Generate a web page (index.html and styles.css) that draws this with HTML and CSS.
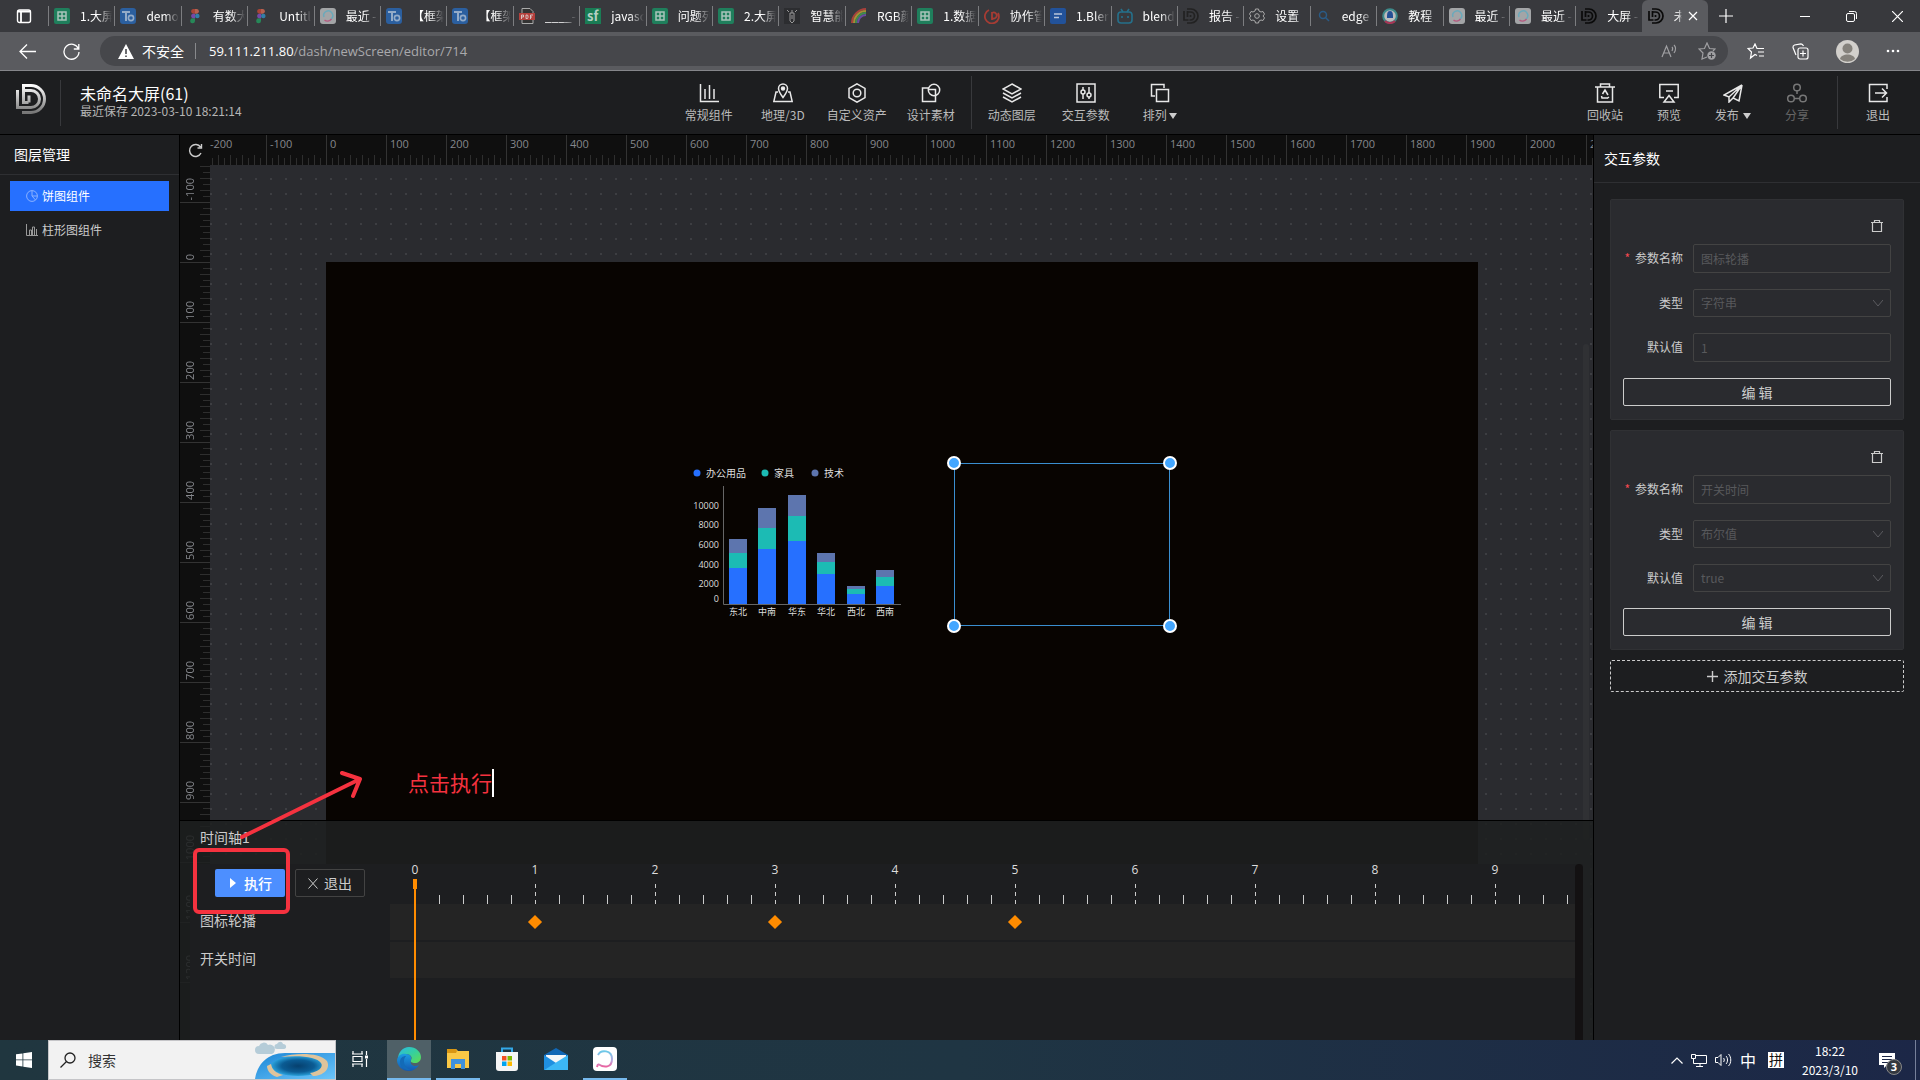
FILE: index.html
```html
<!DOCTYPE html>
<html lang="zh-CN">
<head>
<meta charset="utf-8">
<title>未命名大屏(61)</title>
<link rel="stylesheet" href="styles.css">
</head>
<body>
<svg class="defs" aria-hidden="true">
  <defs>
    <linearGradient id="silver" x1="0" y1="0" x2="0" y2="1"><stop offset="0" stop-color="#fff"/><stop offset="1" stop-color="#777"/></linearGradient>
    <linearGradient id="edge-a" x1="0" y1="0" x2="1" y2="1"><stop offset="0" stop-color="#2bb8e8"/><stop offset=".5" stop-color="#35cfa0"/><stop offset="1" stop-color="#62dc4c"/></linearGradient>
    <linearGradient id="edge-b" x1="0" y1="0" x2="0" y2="1"><stop offset="0" stop-color="#1b9de2"/><stop offset="1" stop-color="#1557b0"/></linearGradient>
    <linearGradient id="swirl" x1="0" y1="0" x2="0" y2="1"><stop offset="0" stop-color="#6cc9e8"/><stop offset=".6" stop-color="#b9a6dd"/><stop offset="1" stop-color="#ee5f9c"/></linearGradient>
    <linearGradient id="sea" x1="0" y1="0" x2="1" y2="1"><stop offset="0" stop-color="#1a86d6"/><stop offset="1" stop-color="#6cc5fa"/></linearGradient>
    <radialGradient id="hole"><stop offset="0" stop-color="#06406e"/><stop offset=".6" stop-color="#0b5c94"/><stop offset="1" stop-color="#2aa2dc"/></radialGradient>
    <symbol id="sheet" viewBox="0 0 16 16"><rect width="16" height="16" rx="2" fill="#1f7f5c"/><path d="M4 4h8v8H4zM8 4v8M4 8h8" fill="none" stroke="#a9c4ba" stroke-width="1.5"/></symbol>
    <symbol id="todo" viewBox="0 0 16 16"><rect width="16" height="16" rx="3" fill="#2b5f9f"/><path d="M2 4h8M6 4v9" fill="none" stroke="#93abc8" stroke-width="2"/><circle cx="11" cy="10" r="2.6" fill="none" stroke="#93abc8" stroke-width="1.6"/></symbol>
    <symbol id="figma" viewBox="0 0 16 16"><path d="M8 1H6a2.4 2.4 0 0 0 0 4.7h2z" fill="#a94436"/><path d="M8 1h2a2.4 2.4 0 0 1 0 4.7H8z" fill="#b5604f"/><path d="M8 5.700H6a2.400 2.400 0 0 0 0 4.700h2z" fill="#7549a8"/><circle cx="10.300" cy="8" r="2.300" fill="#327ea8"/><path d="M8 10.400H6A2.400 2.400 0 1 0 8 13z" fill="#268858"/></symbol>
    <symbol id="swirlicon" viewBox="0 0 16 16"><rect width="16" height="16" rx="3" fill="#a3a5a7"/><path d="M4 9a4.500 4.500 0 1 1 7 2" fill="none" stroke="#6aa9bb" stroke-width="1.500"/><path d="M4.500 12c2 1.600 5 1.400 7-1" fill="none" stroke="#b55a80" stroke-width="1.500"/></symbol>
    <symbol id="dd" viewBox="0 0 32 32"><path d="M2 6v18h9M8 2h8a13 13 0 0 1 0 28H8M9 6v12M9 8h6a7.500 7.500 0 0 1 0 16h-2M15 14v4" fill="none" stroke="currentColor" stroke-width="3.400"/></symbol>
    <symbol id="trash" viewBox="0 0 14 14"><path d="M1 3.500h12M4.500 3.500V1.500h5v2M2.500 3.500v9h9v-9" fill="none" stroke="currentColor" stroke-width="1.200"/></symbol>
    <symbol id="chev" viewBox="0 0 10 8"><path d="M0 1l5 6 5-6" fill="none" stroke="currentColor"/></symbol>
  </defs>
</svg>

<header class="browser">
  <div class="tabs">
    <button class="tab-menu" aria-label="标签页操作"><svg width="16" height="16" viewBox="0 0 16 16"><rect x="1.500" y="2" width="13" height="12.500" rx="2" fill="none" stroke="#fff" stroke-width="1.400"/><path d="M1.500 3.500h13M5 4v10" stroke="#fff" stroke-width="1.800"/></svg></button>
    <div class="tab"><svg><use href="#sheet"/></svg><span>1.大屏</span></div>
    <div class="tab"><svg><use href="#todo"/></svg><span>demo</span></div>
    <div class="tab"><svg><use href="#figma"/></svg><span>有数大</span></div>
    <div class="tab"><svg><use href="#figma"/></svg><span>Untitl</span></div>
    <div class="tab"><svg><use href="#swirlicon"/></svg><span>最近 -</span></div>
    <div class="tab"><svg><use href="#todo"/></svg><span>【框架</span></div>
    <div class="tab"><svg><use href="#todo"/></svg><span>【框架</span></div>
    <div class="tab"><svg viewBox="0 0 16 16"><path d="M3 .5h8l3 3v12H3z" fill="#333" stroke="#aaa"/><rect x="0" y="5" width="16" height="7" fill="#b4403c"/><path d="M2.500 11V7h2v2h-2M7 7v3.500h1.500l.5-1V8l-.5-1zM11.500 11V7H14M11.500 9H13" fill="none" stroke="#ddd" stroke-width=".8"/></svg><span>____-</span></div>
    <div class="tab"><svg viewBox="0 0 16 16"><rect width="16" height="16" fill="#1a7d55"/><text x="2" y="13" font-size="13" font-weight="700" fill="#b5cfc4">sf</text></svg><span>javasc</span></div>
    <div class="tab"><svg><use href="#sheet"/></svg><span>问题列</span></div>
    <div class="tab"><svg><use href="#sheet"/></svg><span>2.大屏</span></div>
    <div class="tab"><svg viewBox="0 0 16 16"><rect width="16" height="16" fill="#2c2d30"/><path d="M6 5h4v8l-2 2-2-2zM8 5V2M5 4L3 2M11 4l2-2M8 7v4" fill="none" stroke="#999"/></svg><span>智慧能</span></div>
    <div class="tab"><svg viewBox="0 0 16 16" fill="none" stroke-width="2"><path d="M1 15C1 8 7 1 15 1" stroke="#a8413b"/><path d="M3 15C3 9 8 3 15 3" stroke="#a98c35"/><path d="M5 15c0-5 4-10 10-10" stroke="#3f8d4f"/><path d="M7 15c0-4 3-8 8-8" stroke="#6a4ba0"/></svg><span>RGB颜</span></div>
    <div class="tab"><svg><use href="#sheet"/></svg><span>1.数据</span></div>
    <div class="tab"><svg viewBox="0 0 16 16" fill="none" stroke="#a63c34" stroke-width="1.800"><path d="M5 2a7 7 0 1 0 9 3M8 12V4M8 5a3 3 0 1 1 0 5"/></svg><span>协作管</span></div>
    <div class="tab"><svg viewBox="0 0 16 16"><rect width="16" height="16" rx="2" fill="#22529a"/><path d="M4 6h8M4 9.500h5" stroke="#b8c5da" stroke-width="1.600"/></svg><span>1.Blen</span></div>
    <div class="tab"><svg viewBox="0 0 16 16" fill="none" stroke="#25708b" stroke-width="1.600"><rect x="1" y="4" width="14" height="11" rx="3"/><path d="M4 1l2 3M12 1l-2 3M5 8v2M11 8v2"/></svg><span>blend</span></div>
    <div class="tab dark"><svg><use href="#dd"/></svg><span>报告 -</span></div>
    <div class="tab"><svg viewBox="0 0 16 16" fill="none" stroke="#aaa"><path d="M6.500 1h3l.5 2 2 1 2-.5 1.500 2.600L14 8l1.500 1.900L14 12.500l-2-.5-2 1-.5 2h-3L6 13l-2-1-2 .5L.5 9.900 2 8 .5 6.100 2 3.500l2 .5 2-1z"/><circle cx="8" cy="8" r="2.300"/></svg><span>设置</span></div>
    <div class="tab"><svg viewBox="0 0 16 16" fill="none" stroke="#2a5b86" stroke-width="1.500"><circle cx="7" cy="7" r="3.500"/><path d="M9.500 9.500L13 13"/></svg><span>edge</span></div>
    <div class="tab"><svg viewBox="0 0 16 16"><circle cx="8" cy="8" r="6.800" fill="#bbb" stroke="#3d8a8a" stroke-width="2"/><path d="M3 13a7 7 0 0 0 10 0" fill="none" stroke="#a83555" stroke-width="2"/><path d="M8 3c3 0 3 3 3 7H5c0-4 0-7 3-7z" fill="#244f94"/></svg><span>教程</span></div>
    <div class="tab"><svg><use href="#swirlicon"/></svg><span>最近 -</span></div>
    <div class="tab"><svg><use href="#swirlicon"/></svg><span>最近 -</span></div>
    <div class="tab black"><svg><use href="#dd"/></svg><span>大屏 -</span></div>
    <div class="tab black active"><svg><use href="#dd"/></svg><span>未</span><button aria-label="关闭标签页"><svg viewBox="0 0 10 10"><path d="M1 1l8 8M9 1L1 9" stroke="#fff" stroke-width="1.200"/></svg></button></div>
    <div class="window-buttons">
      <button aria-label="新建标签页"><svg width="14" height="14" viewBox="0 0 14 14"><path d="M7 0v14M0 7h14" stroke="#fff" stroke-width="1.200"/></svg></button>
      <button aria-label="最小化"><svg width="10" height="10" viewBox="0 0 10 10"><path d="M0 5.500h10" stroke="#fff"/></svg></button>
      <button aria-label="还原"><svg width="11" height="11" viewBox="0 0 11 11" fill="none" stroke="#fff"><rect x=".5" y="2.500" width="8" height="8" rx="1.500"/><path d="M3 .5h5.500a2 2 0 0 1 2 2V8"/></svg></button>
      <button aria-label="关闭"><svg width="11" height="11" viewBox="0 0 11 11"><path d="M0 0l11 11M11 0L0 11" stroke="#fff" stroke-width="1.200"/></svg></button>
    </div>
  </div>
  <div class="toolbar">
    <button aria-label="后退"><svg width="17" height="15" viewBox="0 0 17 15" fill="none" stroke="#fff" stroke-width="1.300"><path d="M8 .5l-7 7 7 7M1 7.500h16"/></svg></button>
    <button aria-label="刷新"><svg width="17" height="17" viewBox="0 0 17 17" fill="none" stroke="#fff" stroke-width="1.300"><path d="M15.500 6A7.500 7.500 0 1 0 16 9M15.800 1v5h-5"/></svg></button>
    <div class="address">
      <svg width="16" height="15" viewBox="0 0 16 15"><path d="M8 0l8 15H0z" fill="#fff"/><path d="M8 5v5M8 11.500v1.500" stroke="#46474b" stroke-width="1.600"/></svg>
      <span class="insecure">不安全</span>
      <span class="url"><b>59.111.211.80</b>/dash/newScreen/editor/714</span>
      <svg width="17" height="16" viewBox="0 0 17 16" fill="none" stroke="#a0a0a3" stroke-width="1.200"><path d="M1 14L5.500 3 10 14M2.500 10h6M11 4c1 1 1 2 0 4M13 2c2 2 2 5 0 8"/></svg>
      <svg width="18" height="18" viewBox="0 0 18 18" fill="none" stroke="#a0a0a3" stroke-width="1.200"><path d="M9 15l-5 2 1-6-4-4 5.500-.5L9 1l2.500 5.500L17 7l-2 2"/><circle cx="13.500" cy="13.500" r="4.200" fill="#a0a0a3" stroke="none"/><path d="M13.500 11v5M11 13.500h5" stroke="#46474b"/></svg>
    </div>
    <button aria-label="收藏夹"><svg width="18" height="17" viewBox="0 0 18 17" fill="none" stroke="#fff" stroke-width="1.200"><path d="M10 12.500l-2-1-4.500 3.500 1-6-3.500-3.500 5-.5L8 1l2 4.500h7M11 9h6M12 13h5"/></svg></button>
    <button aria-label="集锦"><svg width="17" height="17" viewBox="0 0 17 17" fill="none" stroke="#fff" stroke-width="1.200"><rect x="6" y="5" width="10" height="11" rx="2"/><path d="M11 7.500v6M8 10.500h6M4 12L1 4.500C.8 3 1 2.500 2.500 2L9 .8c1.500 0 2 1 2.500 2.200"/></svg></button>
    <button aria-label="用户"><svg width="23" height="23" viewBox="0 0 23 23"><circle cx="11.500" cy="11.500" r="11.500" fill="#d2d0cc"/><circle cx="11.500" cy="8.500" r="5" fill="#85827c"/><path d="M4 19c1-6 14-6 15 0a11.500 11.500 0 0 1-15 0z" fill="#85827c"/></svg></button>
    <button aria-label="更多"><svg width="14" height="4" viewBox="0 0 14 4" fill="#fff"><circle cx="2" cy="2" r="1.300"/><circle cx="7" cy="2" r="1.300"/><circle cx="12" cy="2" r="1.300"/></svg></button>
  </div>
</header>

<header class="app-header">
  <svg class="logo" viewBox="0 0 32 32" fill="none" stroke="url(#silver)" stroke-width="3"><path d="M2.500 7v17.500H16a8.500 8.500 0 0 0 0-17M7 2.500h9a13.500 13.500 0 0 1 0 27H7M8.500 2v17.500h5M8 7.500h8M14 12.500v7"/></svg>
  <div class="doc">
    <h1>未命名大屏(61)</h1>
    <p>最近保存 2023-03-10 18:21:14</p>
  </div>
  <nav class="tools">
    <button><svg viewBox="0 0 20 20"><path d="M1.500 1v17.500H20M6 6v10M10.500 2v14M15 6v10"/></svg>常规组件</button>
    <button><svg viewBox="0 0 20 20"><path d="M5 9H3L.8 18.500h18.400L17 9h-2M10 14.500c-3-4-4.500-6-4.500-9a4.500 4.500 0 0 1 9 0c0 3-1.500 5-4.500 9z"/><circle cx="10" cy="5.500" r="1.500" fill="#fff"/></svg>地理/3D</button>
    <button><svg viewBox="0 0 20 20"><path d="M10 .8l8 4.600v9.200l-8 4.600-8-4.600V5.400z"/><circle cx="10" cy="10" r="3.800"/></svg>自定义资产</button>
    <button><svg viewBox="0 0 20 20"><path d="M8 5H1.500v13.500h13V13"/><circle cx="13" cy="7" r="5.700"/><path d="M8 6.500h6.500V12"/></svg>设计素材</button>
    <i class="split"></i>
    <button><svg viewBox="0 0 20 20"><path d="M10 1l9 5-9 5-9-5zM1 10l9 5 9-5M1 14l9 5 9-5"/></svg>动态图层</button>
    <button><svg viewBox="0 0 20 20"><path d="M1 1h18v18H1zM7 4v3M7 11v5M13 4v6M13 14v2"/><circle cx="7" cy="9" r="2"/><circle cx="13" cy="12" r="2"/></svg>交互参数</button>
    <button><svg viewBox="0 0 20 20"><path d="M5 13H1.500V1.500H14V5M6.500 6.500h12v12h-12z"/></svg><span>排列<i class="caret"></i></span></button>
  </nav>
  <nav class="actions">
    <button><svg viewBox="0 0 20 20"><path d="M0 4h20M5.500 4V1h9v3M2.500 4v15h15V4M7.500 11L10 7l3 5M12.500 15H7l-.5-2M12 15.500l2-1.500"/></svg>回收站</button>
    <button><svg viewBox="0 0 20 20"><path d="M5 14.500H.8V1.500h18.400v13H15M7 8h7M10 12.500l5 6.500H5z"/></svg>预览</button>
    <button><svg viewBox="0 0 20 20"><path d="M19 2L1 12l5 2zM19 2l-3 16-6-3zM6 14v5l4-4"/></svg><span>发布 <i class="caret"></i></span></button>
    <button class="off"><svg viewBox="0 0 20 20"><circle cx="10" cy="4.500" r="3.300"/><circle cx="4" cy="15.500" r="3.300"/><circle cx="16" cy="15.500" r="3.300"/><path d="M10 8v3M8 15.500h4"/></svg>分享</button>
    <i class="split"></i>
    <button><svg viewBox="0 0 20 20"><path d="M19 6V1.500H1.500v17H19V14M7 10h11M14 5.500l4.500 4.500-4.500 4.500"/></svg>退出</button>
  </nav>
</header>

<main class="workspace">
  <aside class="layers">
    <h2>图层管理</h2>
    <ul>
      <li class="selected"><svg viewBox="0 0 12 12"><circle cx="6" cy="6" r="5.400"/><path d="M6 .6V6h5.400M6 6l3.500 4"/></svg>饼图组件</li>
      <li><svg viewBox="0 0 12 12"><path d="M.5 0v11.500H12M3.500 6v5M5.500 6v5M3.500 6h2M6.500 3v8M8.500 3v8M6.500 3h2M10.500 5v6"/></svg>柱形图组件</li>
    </ul>
  </aside>

  <section class="canvas">
    <button class="reset" aria-label="重置"><svg width="15" height="15" viewBox="0 0 15 15" fill="none" stroke="#ccc" stroke-width="1.400"><path d="M12.500 4A6 6 0 1 0 13 10M13.500 1v4h-4"/></svg></button>
    <div class="ruler-h"><span>-200</span><span>-100</span><span>0</span><span>100</span><span>200</span><span>300</span><span>400</span><span>500</span><span>600</span><span>700</span><span>800</span><span>900</span><span>1000</span><span>1100</span><span>1200</span><span>1300</span><span>1400</span><span>1500</span><span>1600</span><span>1700</span><span>1800</span><span>1900</span><span>2000</span><span>2100</span></div>
    <div class="ruler-v"><div><span>-100</span></div><div><span>0</span></div><div><span>100</span></div><div><span>200</span></div><div><span>300</span></div><div><span>400</span></div><div><span>500</span></div><div><span>600</span></div><div><span>700</span></div><div><span>800</span></div><div><span>900</span></div><div><span>1000</span></div><div><span>1100</span></div><div><span>1200</span></div></div>
    <div class="grid">
      <div class="stage">
        <svg class="chart" width="220" height="160" viewBox="0 0 220 160">
          <g class="legend"><circle cx="11" cy="11" r="3.500" fill="#2670ff"/><text x="20" y="15">办公用品</text><circle cx="79" cy="11" r="3.500" fill="#1cbbb4"/><text x="88" y="15">家具</text><circle cx="129" cy="11" r="3.500" fill="#5d75ae"/><text x="138" y="15">技术</text></g>
          <path d="M37.500 24v118.500H215" fill="none" stroke="#666"/>
          <g class="y-labels"><text x="33" y="47">10000</text><text x="33" y="66">8000</text><text x="33" y="86">6000</text><text x="33" y="106">4000</text><text x="33" y="125">2000</text><text x="33" y="140">0</text></g>
          <g fill="#5d75ae"><path d="M43 77h18v14H43zM72 46h18v20H72zM102 33h18v21h-18zM131 91h18v9h-18zM161 124h18v3h-18zM190 108h18v7h-18z"/></g>
          <g fill="#1cbbb4"><path d="M43 91h18v15H43zM72 66h18v21H72zM102 54h18v25h-18zM131 100h18v12h-18zM161 127h18v5h-18zM190 115h18v9h-18z"/></g>
          <g fill="#2670ff"><path d="M43 106h18v36H43zM72 87h18v55H72zM102 79h18v63h-18zM131 112h18v30h-18zM161 132h18v10h-18zM190 124h18v18h-18z"/></g>
          <g class="x-labels"><text x="52" y="153">东北</text><text x="81" y="153">中南</text><text x="111" y="153">华东</text><text x="140" y="153">华北</text><text x="170" y="153">西北</text><text x="199" y="153">西南</text></g>
        </svg>
        <div class="selection"><i></i><i></i><i></i><i></i></div>
      </div>
      <i class="scroll-thumb"></i>
    </div>

    <section class="timeline">
      <h3>时间轴1</h3>
      <div class="timeline-body">
        <div class="names">
          <div class="run">
            <button class="primary"><svg width="6" height="10" viewBox="0 0 6 10"><path d="M0 0l6 5-6 5z" fill="#fff"/></svg>执行</button>
            <button class="plain"><svg width="10" height="11" viewBox="0 0 10 11"><path d="M.5 .5l9 10M9.500 .5l-9 10" stroke="#ccc"/></svg>退出</button>
          </div>
          <p>图标轮播</p>
          <p>开关时间</p>
        </div>
        <div class="tracks">
          <div class="scale"><span>0</span><span>1</span><span>2</span><span>3</span><span>4</span><span>5</span><span>6</span><span>7</span><span>8</span><span>9</span><span></span></div>
          <div class="track"><i class="key k1"></i><i class="key k3"></i><i class="key k5"></i></div>
          <div class="track"></div>
          <i class="playhead"></i>
        </div>
        <i class="track-scroll"></i>
      </div>
    </section>
    <svg class="mark" width="190" height="160" viewBox="0 0 190 160" fill="none" stroke="#f5323f" stroke-width="4"><rect x="15" y="90" width="93" height="62" rx="4"/><path d="M62 77L178 20M162 13l18 6-7 17" stroke-linecap="round" stroke-linejoin="round"/></svg>
    <p class="note">点击执行</p>
  </section>

  <aside class="params">
    <h2>交互参数</h2>
    <div class="param-list">
      <form class="card">
        <button type="button" class="del" aria-label="删除"><svg width="14" height="14"><use href="#trash"/></svg></button>
        <label class="required" for="n1">参数名称</label><input id="n1" value="图标轮播" disabled>
        <label for="t1">类型</label><div class="pick"><select id="t1" disabled><option>字符串</option></select><svg width="10" height="8"><use href="#chev"/></svg></div>
        <label for="d1">默认值</label><input id="d1" value="1" disabled>
        <button type="button" class="edit">编 辑</button>
      </form>
      <form class="card">
        <button type="button" class="del" aria-label="删除"><svg width="14" height="14"><use href="#trash"/></svg></button>
        <label class="required" for="n2">参数名称</label><input id="n2" value="开关时间" disabled>
        <label for="t2">类型</label><div class="pick"><select id="t2" disabled><option>布尔值</option></select><svg width="10" height="8"><use href="#chev"/></svg></div>
        <label for="d2">默认值</label><div class="pick"><select id="d2" disabled><option>true</option></select><svg width="10" height="8"><use href="#chev"/></svg></div>
        <button type="button" class="edit">编 辑</button>
      </form>
      <button class="add"><svg width="11" height="11" viewBox="0 0 11 11"><path d="M5.500 0v11M0 5.500h11" stroke="#ccc" stroke-width="1.400"/></svg>添加交互参数</button>
    </div>
  </aside>
</main>

<footer class="taskbar">
  <button class="start" aria-label="开始"><svg width="16" height="16" viewBox="0 0 16 16" fill="#fff"><path d="M0 2.300l6.500-.9v6.100H0zM7.300 1.300L16 0v7.500H7.300zM0 8.300h6.500v6.200L0 13.600zM7.300 8.300H16V16l-8.700-1.300z"/></svg></button>
  <div class="search">
    <svg width="16" height="16" viewBox="0 0 16 16" fill="none" stroke="#222" stroke-width="1.300"><circle cx="10" cy="6" r="5"/><path d="M6.500 9.500L.5 15.500"/></svg>
    <input aria-label="搜索" placeholder="搜索">
    <svg width="80" height="38" viewBox="0 0 80 38"><path d="M4 13a4 4 0 0 1 0-8 5 5 0 0 1 9-1 4 4 0 0 1 4 9zM22 8a2.500 2.500 0 0 1 0-5c2-3 5-3 6 0 4 0 4 5 1 5z" fill="#b5ccd8"/><path d="M0 38C2 24 12 12 30 12h50v26z" fill="url(#sea)"/><ellipse cx="43" cy="25" rx="27" ry="10" fill="url(#hole)"/><path d="M12 25c0 5 4 9 10 11l6-2c-7-2-11-5-12-11zM26 16c14-4 38-5 46 4 4 8-4 15-14 15l-3-3c8-1 14-6 11-10-4-6-20-8-40-6z" fill="#dfc49b"/></svg>
  </div>
  <button class="task" aria-label="任务视图"><svg width="16" height="16" viewBox="0 0 16 16" fill="none" stroke="#fff" stroke-width="1.200"><path d="M0 3h11M0 13h11M1 0v3M10 0v3M1 16v-3M10 16v-3M1 5.500h9v5H1zM14.500 0v4M14.500 8v8"/><path d="M13 4.500h3v3h-3z" fill="#fff" stroke="none"/></svg></button>
  <button class="task on current" aria-label="Microsoft Edge"><svg width="24" height="24" viewBox="0 0 24 24"><path d="M1 12C1 5 6 0 12 0c7 0 12 5 12 10 0 4-3 6-6 6-3 0-5-1-4-3 2-3-1-6-5-6-4 0-7 2-8 5z" fill="url(#edge-a)"/><path d="M0 13c1-5 5-7 9-6 4 0 6 3 5 6-2 4 3 8 8 5-3 4-6 6-10 6C5 24 0 19 0 13z" fill="url(#edge-b)"/><path d="M9 9c-4 4-2 12 5 14-6 1-11-3-11-8 0-4 3-6 6-6z" fill="#136bb8"/></svg></button>
  <button class="task on" aria-label="文件资源管理器"><svg width="22" height="22" viewBox="0 0 22 22"><path d="M0 1h9l2 2h11v17H0z" fill="#f9c846"/><path d="M0 1h9l1 2-1 2H0z" fill="#d89613"/><path d="M4 21v-10h14v10h-4v-5H8v5z" fill="#3f91dc"/></svg></button>
  <button class="task" aria-label="应用商店"><svg width="24" height="24" viewBox="0 0 24 24"><path d="M7 7V1.500h10V7" fill="none" stroke="#33a8e8" stroke-width="2"/><path d="M1 5h22v16a3 3 0 0 1-3 3H4a3 3 0 0 1-3-3z" fill="#f5f5f5"/><path d="M7 9h4.500v4.500H7z" fill="#f25022"/><path d="M12.500 9H17v4.500h-4.500z" fill="#7fba00"/><path d="M7 14.500h4.500V19H7z" fill="#00a4ef"/><path d="M12.500 14.500H17V19h-4.500z" fill="#ffb900"/></svg></button>
  <button class="task" aria-label="邮件"><svg width="24" height="24" viewBox="0 0 24 24"><path d="M0 8l12-7 12 7v15H0z" fill="#1167b5"/><path d="M2 8h20v8H2z" fill="#f4f6f8"/><path d="M0 8l12 8L0 23z" fill="#1f8fe0"/><path d="M24 8v15H0z" fill="#3cb7f5"/></svg></button>
  <button class="task on" aria-label="文档"><svg width="24" height="24" viewBox="0 0 24 24"><rect width="24" height="24" rx="4" fill="#fff"/><path d="M5 8C8 2 19 3 19 12s-8 9-14 5M4 20l1-3" fill="none" stroke="url(#swirl)" stroke-width="2"/></svg></button>
  <div class="tray">
    <svg width="12" height="7" viewBox="0 0 12 7" fill="none" stroke="#fff" stroke-width="1.200"><path d="M.5 6.500L6 1l5.500 5.500"/></svg>
    <svg width="16" height="14" viewBox="0 0 16 14" fill="none" stroke="#fff"><path d="M5 2.500h10.500v8H2.500V6M.5 1.500h4v4h-4zM9 10.500v3M5 13.500h7"/></svg>
    <svg width="17" height="14" viewBox="0 0 17 14" fill="none" stroke="#fff"><path d="M.5 4.500H3l3-3v11l-3-3H.5zM8.500 5c1 1 1 3 0 4M11 3c2 2 2 6 0 8M13.500 1c3 3 3 9 0 12"/></svg>
    <span class="ime">中</span>
    <span class="pin">拼</span>
    <time>18:22<br>2023/3/10</time>
    <div class="notice"><svg width="16" height="15" viewBox="0 0 16 15"><path d="M0 0h16v12H8l-3 3v-3H0z" fill="#fff"/><path d="M3 3.500h10M3 6.500h10M3 9.500h6" stroke="#1c2747"/></svg><b>3</b></div>
  </div>
</footer>
</body>
</html>
```
FILE: styles.css
```css
* { box-sizing: border-box; }
body {
  margin: 0;
  min-height: 100vh;
  display: flex;
  flex-direction: column;
  background: #1d1e20;
  color: #ccc;
  font: 12px/16px "Noto Sans CJK SC", sans-serif;
}
h1, h2, h3, p, ul { margin: 0; padding: 0; font-weight: 400; list-style: none; }
button { margin: 0; padding: 0; border: 0; background: none; color: inherit; font: inherit; }
svg { display: block; flex: none; }
.defs { position: absolute; width: 0; height: 0; }

/* Browser frame */
.browser { background: #5a5b5f; border-bottom: 1px solid #85868a; }
.tabs { display: flex; height: 32px; background: #38393d; }
.tab-menu { width: 48px; display: grid; place-items: center; }
.tab { flex: 1 1 0; min-width: 0; display: flex; align-items: center; gap: 10px; padding: 0 2px 0 6px; position: relative; color: #fff; }
.tab::before { content: ""; position: absolute; left: 0; top: 6px; height: 20px; width: 1px; background: #7c7d80; }
.tab > svg { width: 16px; height: 16px; }
.tab span { flex: 1; overflow: hidden; white-space: nowrap; -webkit-mask: linear-gradient(90deg, #000 55%, transparent); mask: linear-gradient(90deg, #000 55%, transparent); }
.tab.dark svg { color: #222; }
.tab.black > svg { color: #0a0a0a; }
.tab.active { background: #5a5b5f; border-radius: 6px 6px 0 0; }
.tab.active::before { display: none; }
.tab.active span { flex: 0 0 8px; }
.tab.active button { margin-left: -4px; }
.tab.active button svg { width: 10px; height: 10px; }
.window-buttons { width: 212px; display: grid; grid-template-columns: 36px 1fr 46px 46px; }
.window-buttons button { display: grid; align-items: center; justify-items: center; }
.window-buttons button:nth-child(2) { justify-items: end; padding-right: 18px; }
.toolbar { display: flex; align-items: center; height: 38px; padding: 0 20px 0 19px; gap: 27px; }
.toolbar > button:nth-child(4) { margin-left: -8px; }
.address { flex: 1; height: 30px; margin-left: -7px; padding: 0 12px 0 18px; border-radius: 15px; background: #46474b; display: flex; align-items: center; gap: 8px; color: #fff; font-size: 14px; }
.insecure { padding-right: 11px; border-right: 1px solid #88898c; }
.url { flex: 1; padding-left: 5px; color: #a9a9ac; font-family: "Open Sans", sans-serif; font-size: 13px; }
.url b { color: #fff; font-weight: 400; }
.address svg:last-child { margin-left: 12px; }

/* Application header */
.app-header { display: grid; grid-template-columns: 60px 11fr auto 13fr; height: 64px; border-bottom: 1px solid #000; background: #1d1e20; }
.logo { width: 32px; height: 32px; margin: 12px 0 0 15px; }
.doc { margin: 9px 0 9px; padding: 4px 0 0 19px; border-left: 1px solid #38393c; height: 46px; }
.doc h1 { color: #fff; font-size: 16px; line-height: 18px; }
.doc p { color: #b5b5b5; line-height: 18px; }
.tools, .actions { display: flex; align-items: stretch; }
.actions { justify-content: flex-end; padding-right: 8px; }
.app-header button { width: 74px; padding-top: 12px; display: flex; flex-direction: column; align-items: center; gap: 4px; color: #bbb; line-height: 16px; }
.app-header button svg { width: 20px; height: 20px; fill: none; stroke: #e8e8e8; stroke-width: 1.500; }
.actions button { width: 64px; }
.actions button:last-child { width: 68px; }
.app-header .off { color: #666; }
.app-header .off svg { stroke: #777; }
.split { width: 1px; margin: 5px 0 6px 3px; background: #38393c; }
.tools .split { margin-right: 3px; }
.actions .split { margin: 5px 6px 6px 8px; }
.caret { display: inline-block; margin-left: 2px; border: 4px solid transparent; border-top: 6px solid #ccc; border-bottom: 0; vertical-align: 1px; }

/* Workspace */
.workspace { flex: 1; display: grid; grid-template-columns: 180px 1fr 327px; }
.layers { border-right: 1px solid #000; }
.layers h2 { height: 40px; padding-left: 14px; border-bottom: 1px solid #2e2f32; color: #fff; font-size: 14px; line-height: 38px; }
.layers ul { padding: 6px 10px; display: grid; gap: 4px; }
.layers li { display: flex; align-items: center; gap: 4px; height: 30px; padding-left: 16px; }
.layers li svg { width: 12px; height: 12px; fill: none; stroke: #999; }
.layers .selected { background: #2670ff; color: #fff; }
.layers .selected svg { stroke: #8bb1ff; }

.canvas { position: relative; display: grid; grid-template: 30px 1fr / 30px 1fr; overflow: hidden; background: #0f0f0f; min-width: 0; }
.reset { display: grid; place-items: center; }
.ruler-h { display: flex; overflow: hidden; margin-left: -4px; clip-path: inset(0 0 0 4px); color: #85878c; font: 11px/16px "Open Sans", sans-serif; }
.ruler-h span {
  flex: 0 0 60px; padding: 1px 0 0 3px; border-left: 1px solid #333;
  background: repeating-linear-gradient(90deg, transparent 0 11px, #2e2e2e 11px 12px) 0 100% / 100% 10px no-repeat,
    repeating-linear-gradient(90deg, transparent 0 5px, #2e2e2e 5px 6px) 0 100% / 100% 7px no-repeat;
}
.ruler-v { height: 0; min-height: 100%; overflow: hidden; color: #85878c; font: 11px/16px "Open Sans", sans-serif; }
.ruler-v div {
  height: 60px; display: flex; align-items: flex-end; padding: 0 0 2px 2px; border-bottom: 1px solid #333;
  background: repeating-linear-gradient(0deg, transparent 0 11px, #2e2e2e 11px 12px) 100% 0 / 10px 100% no-repeat,
    repeating-linear-gradient(0deg, transparent 0 5px, #2e2e2e 5px 6px) 100% 0 / 7px 100% no-repeat;
}
.ruler-v div:first-child { margin-top: -22px; }
.ruler-v span { writing-mode: vertical-rl; transform: rotate(180deg); }
.grid { position: relative; overflow: hidden; background: conic-gradient(from 270deg at 2px 2px, #3d3e42 90deg, transparent 0) 0 13px / 15px 15px #2a2b2f; }
.stage { position: absolute; left: 116px; top: 97px; width: 1152px; height: 648px; background: #080401; }
.chart { position: absolute; left: 360px; top: 200px; fill: #ddd; font-size: 10px; }
.y-labels { text-anchor: end; font: 9px "Open Sans", sans-serif; }
.x-labels { text-anchor: middle; font-size: 9px; }
.selection { position: absolute; left: 628px; top: 201px; width: 216px; height: 163px; border: 1px solid #3a8ed0; }
.selection i { position: absolute; width: 14px; height: 14px; border: 2px solid #fff; border-radius: 50%; background: #43a6ff; left: -8px; top: -8px; }
.selection i:nth-child(2n) { left: auto; right: -8px; }
.selection i:nth-child(n+3) { top: auto; bottom: -8px; }
.scroll-thumb { position: absolute; right: 4px; top: 179px; bottom: 200px; width: 6px; border-radius: 3px; background: #303134; }

/* Timeline */
.timeline { position: absolute; left: 0; right: 0; bottom: 0; height: 220px; padding: 0 10px; border-top: 1px solid #000; background: rgba(30, 32, 32, .87); font-size: 14px; display: flex; flex-direction: column; }
.timeline h3 { height: 43px; padding-left: 10px; font-size: 14px; line-height: 32px; }
.timeline-body { flex: 1; display: grid; grid-template-columns: 200px 1fr 8px; background: #1d1e20; }
.run { display: flex; gap: 10px; height: 40px; padding: 5px 0 7px 25px; }
.run button { width: 70px; height: 28px; display: flex; align-items: center; justify-content: center; gap: 8px; border-radius: 2px; }
.run .primary { padding-left: 2px; background: #4d8fff; color: #fff; font-weight: 500; }
.run .plain { border: 1px solid #434343; gap: 6px; }
.names p { height: 38px; padding-left: 10px; line-height: 32px; }
.tracks { position: relative; overflow: hidden; min-width: 0; }
.scale { display: flex; height: 40px; color: #ddd; font: 12px/12px "Open Sans", sans-serif; margin-left: -35px; }
.scale span {
  flex: 0 0 120px; text-align: center;
  background: repeating-linear-gradient(180deg, #ccc 0 4px, transparent 4px 8px) 60px 100% / 1px 20px no-repeat,
    linear-gradient(#ccc, #ccc) 12px 100% / 1px 9px no-repeat,
    linear-gradient(#ccc, #ccc) 36px 100% / 1px 9px no-repeat,
    linear-gradient(#ccc, #ccc) 84px 100% / 1px 9px no-repeat,
    linear-gradient(#ccc, #ccc) 108px 100% / 1px 9px no-repeat;
}
.scale span:first-child {
  background: linear-gradient(#ccc, #ccc) 84px 100% / 1px 9px no-repeat,
    linear-gradient(#ccc, #ccc) 108px 100% / 1px 9px no-repeat;
}
.track { position: relative; height: 36px; margin-bottom: 2px; background: #242424; }
.key { position: absolute; top: 13px; width: 10px; height: 10px; margin-left: -5px; background: #ff8c00; transform: rotate(45deg); }
.k1 { left: 145px; }
.k3 { left: 385px; }
.k5 { left: 625px; }
.playhead { position: absolute; left: 24px; top: 15px; bottom: 0; width: 2px; background: #ff8c00; }
.playhead::before { content: ""; position: absolute; left: -1px; width: 4px; height: 10px; background: #ff8c00; }
.track-scroll { background: #131112; border-radius: 4px 4px 0 0; }

/* Annotations over the canvas */
.mark { position: absolute; left: 0; bottom: 120px; }
.note { position: absolute; left: 228px; bottom: 243px; height: 28px; border-right: 2px solid #fff; color: #f5323f; font-size: 21px; line-height: 26px; }

/* Parameter panel */
.params { border-left: 1px solid #000; }
.params h2 { height: 48px; padding-left: 10px; border-bottom: 1px solid #2e2f32; color: #fff; font-size: 14px; line-height: 46px; }
.param-list { padding: 16px; display: grid; gap: 10px; }
.card { display: grid; grid-template-columns: 60px 198px; column-gap: 10px; row-gap: 16px; padding: 17px 12px 13px; border: 1px solid #303134; border-radius: 2px; background: #2a2b2f; }
.del { grid-column: 1 / 3; justify-self: end; height: 18px; padding-right: 7px; margin-bottom: -7px; display: grid; align-items: center; }
.card label { text-align: right; line-height: 28px; white-space: nowrap; }
.required::before { content: "*"; margin-right: 5px; color: #f5484f; }
.card input, .card select { appearance: none; width: 100%; height: 28px; padding: 0 7px; border: 1px solid #434343; border-radius: 2px; background: none; color: #58595c; font: inherit; opacity: 1; }
.card input { height: 29px; }
.pick { position: relative; height: 28px; }
.pick svg { position: absolute; right: 8px; top: 10px; color: #5c5c60; }
.edit { grid-column: 1 / 3; height: 28px; border: 1px solid #ccc; border-radius: 2px; font-size: 14px; }
.add { height: 32px; display: flex; align-items: center; justify-content: center; gap: 6px; border: 1px dashed #ccc; border-radius: 2px; font-size: 14px; }

/* Taskbar */
.taskbar { display: flex; height: 40px; background: linear-gradient(90deg, #20363f, #1f3543 50%, #1c2747); color: #fff; }
.start { width: 48px; display: grid; align-items: center; padding-left: 16px; }
.search { width: 288px; display: flex; align-items: center; gap: 12px; padding-left: 11px; border: 1px solid #c5c5c8; background: #f2f2f2; margin-right: 2px; }
.search input { flex: 1; min-width: 0; padding: 0; border: 0; background: none; font: 14px/20px "Noto Sans CJK SC", sans-serif; }
.search input::placeholder { color: #333; }
.task { width: 44px; margin-right: 5px; display: grid; place-items: center; border-bottom: 2px solid transparent; }
.task.on { border-color: #76b9ed; }
.current { background: #4f6067; }
.tray { margin-left: auto; display: flex; align-items: center; gap: 8px; padding-right: 20px; border-right: 1px solid #76809a; margin-right: 4px; }
.ime { font-size: 16px; margin-right: 4px; }
.pin { width: 16px; height: 16px; background: #fff; color: #111; font-size: 14px; line-height: 15px; text-align: center; }
.tray time { width: 76px; text-align: center; line-height: 19px; }
.notice { position: relative; margin-left: 3px; }
.notice b { position: absolute; left: 7px; top: 6px; width: 16px; height: 16px; border: 1px solid #888; border-radius: 50%; background: #333840; font: 700 11px/14px "Open Sans", sans-serif; text-align: center; }
```
